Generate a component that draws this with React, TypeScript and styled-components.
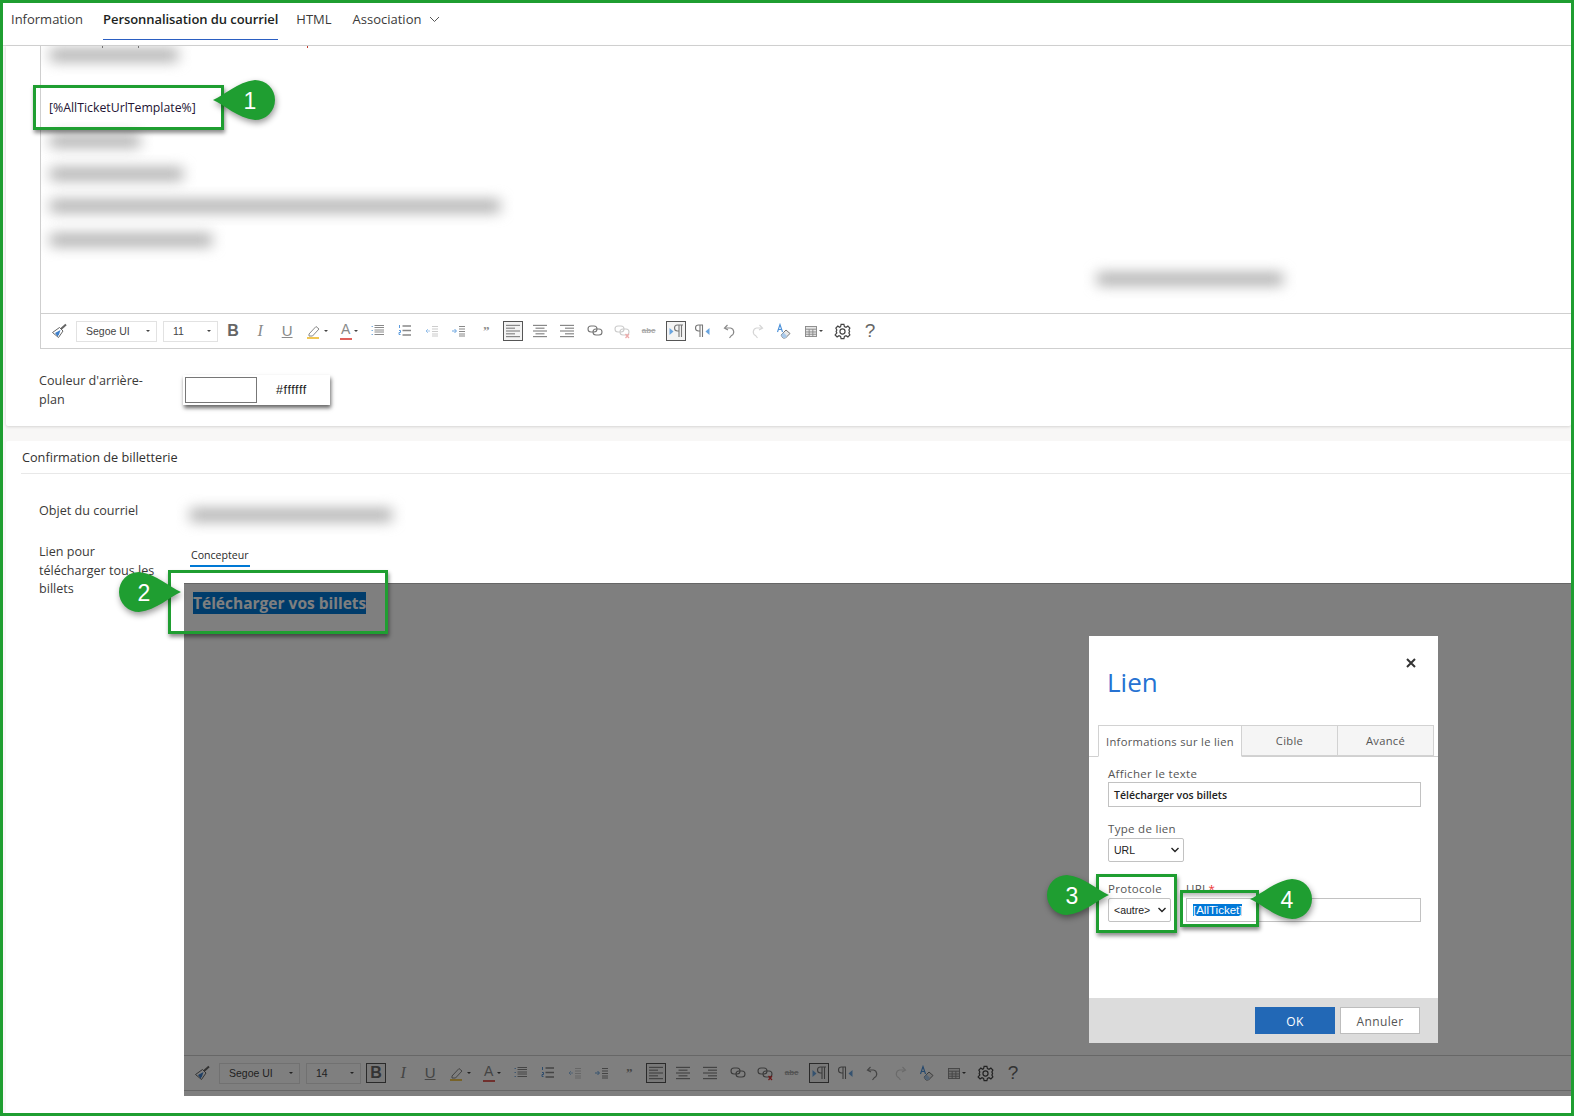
import React from 'react';
import styled, { createGlobalStyle } from 'styled-components';

const GREEN = '#1f9e31';

const GlobalStyle = createGlobalStyle`
  html, body {
    margin: 0;
    padding: 0;
    background: #fff;
    font-family: 'Open Sans', 'Noto Sans', Arial, sans-serif;
  }
`;

const Frame = styled.div`
  position: relative;
  box-sizing: border-box;
  width: 1574px;
  height: 1116px;
  border: 3px solid ${GREEN};
  background: #f8f7f6;
  display: flex;
  flex-direction: column;
  overflow: hidden;
  color: #323130;
`;

const TabBar = styled.nav`
  flex: none;
  box-sizing: border-box;
  height: 43px;
  background: #fff;
  border-bottom: 1px solid #d4d4d4;
  display: flex;
  padding-left: 8px;
  gap: 18px;
`;

const Tab = styled.div<{ $active?: boolean; $ml?: number }>`
  height: 37px;
  box-sizing: border-box;
  margin-left: ${(p) => p.$ml ?? 0}px;
  padding-bottom: 4px;
  font-size: 13px;
  line-height: 19px;
  font-weight: ${(p) => (p.$active ? 600 : 400)};
  letter-spacing: ${(p) => (p.$active ? '-0.07px' : '0')};
  color: ${(p) => (p.$active ? '#201f1e' : '#3b3a39')};
  border-bottom: 1px solid ${(p) => (p.$active ? '#2b5fc2' : 'transparent')};
  display: flex;
  align-items: center;
  gap: 8px;
`;

const CardTop = styled.section`
  flex: none;
  height: 380px;
  margin-left: 3px;
  background: #fff;
  box-shadow: 0 1px 3px rgba(0, 0, 0, 0.14);
  border-radius: 0 0 2px 2px;
`;

const EditorBox = styled.div`
  box-sizing: border-box;
  height: 303px;
  margin-left: 34px;
  border-left: 1px solid #cfcfcf;
  display: flex;
  flex-direction: column;
`;

const EditorBody = styled.div`
  flex: 1;
  padding-left: 9px;
  display: flex;
  flex-direction: column;
  align-items: flex-start;
  overflow: hidden;
`;

const CutLine = styled.div`
  flex: none;
  height: 3px;
  display: flex;
`;

const CutMark = styled.i<{ $ml: number; $red?: boolean }>`
  width: 1px;
  height: 2px;
  margin-left: ${(p) => p.$ml}px;
  background: ${(p) => (p.$red ? '#c0392b' : '#555')};
`;

const BlurLine = styled.div<{ $w: number; $mt: number; $right?: number }>`
  flex: none;
  width: ${(p) => p.$w}px;
  height: 12px;
  margin-top: ${(p) => p.$mt}px;
  background: #a8a8a8;
  filter: blur(7px);
  ${(p) => (p.$right ? `align-self: flex-end; margin-right: ${p.$right}px;` : '')}
`;

const TemplateText = styled.div`
  margin: 39px 0 0 -1px;
  font-size: 12.3px;
  line-height: 16px;
  color: #241433;
`;

const ToolbarRow = styled.div`
  flex: none;
  box-sizing: border-box;
  height: 36px;
  border-top: 1px solid #cfcfcf;
  border-bottom: 1px solid #cfcfcf;
  display: flex;
  align-items: center;
  padding-left: 5px;
`;

const ToolSelect = styled.div<{ $w: number; $ml: number }>`
  flex: none;
  box-sizing: border-box;
  width: ${(p) => p.$w}px;
  height: 21px;
  margin-left: ${(p) => p.$ml}px;
  border: 1px solid #e2e2e2;
  padding: 0 6px 0 9px;
  display: flex;
  align-items: center;
  justify-content: space-between;
  font-family: 'Liberation Sans', Arial, sans-serif;
  font-size: 10.5px;
  color: #444;
`;

const Caret = styled.span`
  width: 0;
  height: 0;
  border-left: 2px solid transparent;
  border-right: 2px solid transparent;
  border-top: 2px solid #444;
`;

const ToolButton = styled.div<{ $w?: number; $ml?: number }>`
  flex: none;
  width: ${(p) => p.$w ?? 27.05}px;
  height: 26px;
  margin-left: ${(p) => p.$ml ?? 0}px;
  display: flex;
  align-items: center;
  justify-content: center;
  gap: 2px;
`;

const ToolFace = styled.div<{ $active?: boolean }>`
  box-sizing: border-box;
  width: 20px;
  height: 20px;
  display: flex;
  align-items: center;
  justify-content: center;
  border: ${(p) => (p.$active ? '1.5px solid #555' : '0')};
  background: ${(p) => (p.$active ? '#f3f3f3' : 'transparent')};
`;

const LetterGlyph = styled.span<{ $serif?: boolean; $italic?: boolean; $bold?: boolean; $under?: boolean; $size?: number; $fade?: boolean }>`
  font-family: ${(p) => (p.$serif ? "'Liberation Serif', serif" : "'Liberation Sans', Arial, sans-serif")};
  font-size: ${(p) => p.$size ?? 15}px;
  line-height: 16px;
  font-style: ${(p) => (p.$italic ? 'italic' : 'normal')};
  font-weight: ${(p) => (p.$bold ? 700 : 400)};
  text-decoration: ${(p) => (p.$under ? 'underline' : 'none')};
  color: ${(p) => (p.$fade ? '#8a8a8a' : '#666')};
`;

const ColorGlyph = styled.span<{ $bar: string }>`
  display: flex;
  width: 12px;
  height: 16px;
  justify-content: center;
  font-family: 'Liberation Sans', Arial, sans-serif;
  font-size: 14px;
  line-height: 14px;
  color: #888;
  border-bottom: 2px solid ${(p) => p.$bar};
`;

const StrikeGlyph = styled.span`
  font-family: 'Liberation Sans', Arial, sans-serif;
  font-size: 8px;
  line-height: 10px;
  color: #aaa;
  text-decoration: line-through;
  font-weight: 700;
`;

const HelpGlyph = styled.span`
  font-family: 'Liberation Sans', Arial, sans-serif;
  font-size: 19px;
  line-height: 18px;
  color: #666;
`;

const MiniCaret = styled(Caret)`
  flex: none;
`;

const FieldRow = styled.div`
  display: flex;
  padding-left: 33px;
`;

const ColorRow = styled(FieldRow)`
  margin-top: 23px;
`;

const FieldLabel = styled.div`
  flex: none;
  width: 145px;
  font-size: 12.6px;
  line-height: 18.5px;
  color: #3b3a39;
`;

const ColorPicker = styled.div`
  flex: none;
  box-sizing: border-box;
  width: 147px;
  height: 30px;
  margin: 3px 0 0 -1px;
  padding: 2px;
  background: #fff;
  box-shadow: 1px 3px 4px rgba(0, 0, 0, 0.6);
  display: flex;
  align-items: center;
`;

const Swatch = styled.div`
  box-sizing: border-box;
  width: 72px;
  height: 26px;
  border: 1px solid #777;
  background: #fff;
`;

const ColorValue = styled.span`
  margin-left: 19px;
  font-family: 'Liberation Sans', Arial, sans-serif;
  font-size: 12.5px;
  letter-spacing: 0.6px;
  color: #222;
`;

const CardBottom = styled.section`
  flex: 1;
  min-height: 0;
  margin: 15px 0 0 3px;
  padding-bottom: 17px;
  background: #fff;
  border-radius: 2px 2px 0 0;
  display: flex;
  flex-direction: column;
`;

const SectionTitle = styled.h2`
  flex: none;
  box-sizing: border-box;
  height: 33px;
  margin: 0 0 0 15px;
  padding: 7px 0 0 1px;
  border-bottom: 1px solid #e8e8e8;
  font-size: 12.7px;
  line-height: 18px;
  font-weight: 500;
  color: #323130;
`;

const SubjectRow = styled(FieldRow)`
  flex: none;
  box-sizing: border-box;
  margin-top: 26px;
  height: 43px;
  padding-top: 2px;
`;

const SubjectBlur = styled.div`
  width: 202px;
  height: 12px;
  margin: 7px 0 0 6px;
  background: #a8a8a8;
  filter: blur(7px);
`;

const LinkRow = styled(FieldRow)`
  flex: 1;
  min-height: 0;
`;

const DesignerColumn = styled.div`
  flex: 1;
  min-width: 0;
  display: flex;
  flex-direction: column;
  margin-top: -1px;
`;

const ModeTabs = styled.div`
  flex: none;
  height: 41px;
  padding-left: 6px;
`;

const ModeTab = styled.div`
  display: inline-block;
  box-sizing: border-box;
  height: 23px;
  padding: 3px 1px 0;
  font-size: 10.6px;
  line-height: 16px;
  color: #2a2a2a;
  border-bottom: 2px solid #0078d4;
`;

const Designer = styled.div`
  position: relative;
  flex: 1;
  min-height: 0;
  box-sizing: border-box;
  border-top: 1px solid #ccc;
  display: flex;
  flex-direction: column;
  padding-bottom: 5px;
`;

const DesignerBody = styled.div`
  flex: 1;
  padding: 8px 0 0 9px;
`;

const SelectedHeading = styled.span`
  font-size: 15.5px;
  line-height: 22px;
  font-weight: 700;
  background: #0078d7;
  color: #fff;
`;

const Shade = styled.div`
  position: absolute;
  inset: -1px 0 0 0;
  background: rgba(0, 0, 0, 0.5);
`;

const Dialog = styled.div`
  position: absolute;
  top: 52px;
  right: 133px;
  width: 349px;
  height: 407px;
  background: #fff;
  display: flex;
  flex-direction: column;
`;

const CloseMark = styled.svg`
  position: absolute;
  top: 22px;
  right: 22px;
  width: 10px;
  height: 10px;
`;

const DialogTitle = styled.h1`
  flex: none;
  box-sizing: border-box;
  height: 89px;
  margin: 0;
  padding: 28px 0 0 18px;
  font-size: 26px;
  line-height: 36px;
  font-weight: 400;
  color: #2672d2;
`;

const DialogTabs = styled.div`
  flex: none;
  height: 32px;
  box-sizing: border-box;
  padding-left: 9px;
  border-bottom: 1px solid #d0d0d0;
  display: flex;
`;

const DialogTab = styled.div<{ $w: number; $active?: boolean }>`
  flex: none;
  box-sizing: border-box;
  width: ${(p) => p.$w}px;
  height: ${(p) => (p.$active ? 32 : 31)}px;
  border: 1px solid #d2d2d2;
  border-left-width: ${(p) => (p.$active ? 1 : 0)}px;
  border-bottom-color: ${(p) => (p.$active ? '#fff' : '#d2d2d2')};
  background: ${(p) => (p.$active ? '#fff' : '#f5f5f5')};
  display: flex;
  align-items: center;
  justify-content: center;
  font-size: 11.2px;
  letter-spacing: 0.3px;
  color: #555;
`;

const DialogBody = styled.div`
  flex: 1;
  padding: 9px 17px 0 19px;
  display: flex;
  flex-direction: column;
`;

const DialogLabel = styled.div<{ $mt?: number }>`
  height: 16px;
  margin-top: ${(p) => p.$mt ?? 0}px;
  font-size: 11.5px;
  line-height: 16px;
  letter-spacing: 0.3px;
  color: #555;
  white-space: nowrap;

  & > b {
    color: #e33;
    font-weight: 400;
  }
`;

const TextField = styled.div<{ $h?: number }>`
  box-sizing: border-box;
  height: ${(p) => p.$h ?? 24}px;
  border: 1px solid #c2c2c2;
  padding-left: 5px;
  display: flex;
  align-items: center;
  font-size: 10.5px;
  font-weight: 600;
  color: #222;
  white-space: nowrap;
`;

const SelectField = styled(TextField)<{ $w: number }>`
  width: ${(p) => p.$w}px;
  margin-top: 1px;
  border-radius: 2px;
  justify-content: space-between;
  padding-right: 4px;
  font-family: 'Liberation Sans', Arial, sans-serif;
  font-weight: 400;
`;

const Chevron = styled.svg`
  flex: none;
  width: 8px;
  height: 6px;
`;

const ProtocolRow = styled.div`
  margin-top: 19px;
  display: flex;
  gap: 15px;
`;

const ProtocolCol = styled.div`
  flex: none;
  width: 63px;
`;

const UrlCol = styled.div`
  flex: 1;
  min-width: 0;
`;

const UrlField = styled(TextField)`
  margin-top: 1px;
  padding-left: 6px;
  font-family: 'Liberation Sans', Arial, sans-serif;
  font-size: 11.5px;
  font-weight: 400;
`;

const SelectedUrl = styled.span`
  background: #0078d7;
  color: #fff;
`;

const DialogFooter = styled.div`
  flex: none;
  box-sizing: border-box;
  height: 45px;
  background: #dcdcdc;
  padding: 9px 18px 0 0;
  display: flex;
  justify-content: flex-end;
  gap: 5px;
`;

const FooterButton = styled.div<{ $primary?: boolean }>`
  box-sizing: border-box;
  width: 80px;
  height: 27px;
  padding-top: 1px;
  display: flex;
  align-items: center;
  justify-content: center;
  font-size: 12px;
  letter-spacing: 0.4px;
  background: ${(p) => (p.$primary ? '#2268b6' : '#fff')};
  color: ${(p) => (p.$primary ? '#fff' : '#555')};
  border: 1px solid ${(p) => (p.$primary ? '#2268b6' : '#bdbdbd')};
`;

const AnnotationLayer = styled.div`
  position: absolute;
  top: -3px;
  left: -3px;
  width: 1574px;
  height: 1116px;
  pointer-events: none;
`;

const Marker = styled.div<{ $x: number; $y: number; $w: number; $h: number; $band?: boolean }>`
  position: absolute;
  box-sizing: border-box;
  left: ${(p) => p.$x}px;
  top: ${(p) => p.$y}px;
  width: ${(p) => p.$w}px;
  height: ${(p) => p.$h}px;
  border: 3px solid ${GREEN};
  box-shadow: 1px 3px 4px rgba(0, 0, 0, 0.45);
  background: ${(p) => (p.$band ? 'linear-gradient(#bbb, #e6e6e6 4px, transparent 5px)' : 'none')};
`;

const CalloutBox = styled.div<{ $x: number; $y: number }>`
  position: absolute;
  left: ${(p) => p.$x}px;
  top: ${(p) => p.$y}px;
  width: 62px;
  height: 40px;
`;

const CalloutShape = styled.svg<{ $flip?: boolean }>`
  display: block;
  width: 62px;
  height: 40px;
  overflow: visible;
  transform: ${(p) => (p.$flip ? 'scaleX(-1)' : 'none')};
  filter: drop-shadow(${(p) => (p.$flip ? '-1px' : '1px')} 3px 3px rgba(0, 0, 0, 0.4));
`;

const CalloutNumber = styled.span<{ $flip?: boolean }>`
  position: absolute;
  top: 1px;
  left: ${(p) => (p.$flip ? 12 : 24)}px;
  width: 26px;
  height: 40px;
  display: flex;
  align-items: center;
  justify-content: center;
  font-family: 'Liberation Sans', Arial, sans-serif;
  font-size: 23px;
  color: #fff;
`;

const I = ({ children }: { children: React.ReactNode }) => (
  <svg width="16" height="16" viewBox="0 0 16 16" fill="none" stroke="#888" strokeWidth="1">
    {children}
  </svg>
);

const Lines = ({ rows }: { rows: [number, number][] }) => (
  <>
    {rows.map(([a, b], i) => (
      <path key={i} d={`M${a} ${2.4 + i * 2.8}H${b}`} strokeWidth="1.2" />
    ))}
  </>
);

const BrushIcon = () => (
  <I>
    <path d="M15 1.5 10 6" stroke="#666" strokeWidth="2" />
    <path d="M8.5 4.5 12 8 7.5 14.5 1.5 9.5Z" fill="#fff" stroke="#666" />
    <path d="M4 10 9.5 7 8 11.5 6.5 13.5Z" fill="#3f7fc9" stroke="none" />
  </I>
);

const ListIcon = () => (
  <I>
    <path d="M3 3.5H1.5M3 7.5H1.5M3 11.5H1.5" stroke="#7fb0e0" strokeWidth="1.2" />
    <path d="M4.5 2.5H14M4.5 4.5H14M4.5 7H14M4.5 9H14M4.5 11.5H14" strokeWidth="1" />
  </I>
);

const NumberListIcon = () => (
  <I>
    <path d="M2.5 2v3M2 7.5h1.5v2H2v2h1.5" stroke="#4a90d9" strokeWidth="0.9" />
    <path d="M5.5 3H14M5.5 7.5H14M5.5 12H14" strokeWidth="1.3" />
  </I>
);

const IndentIcon = ({ out, fade }: { out?: boolean; fade?: boolean }) => (
  <svg width="16" height="16" viewBox="0 0 16 16" fill="none">
    <path d={out ? 'M6 8H2M4 6 2 8l2 2' : 'M1 8H5M3.5 6 5.5 8l-2 2'} stroke="#6aa5e0" strokeWidth="1" opacity={fade ? 0.6 : 1} />
    <path d="M8 3.5H14M8 6H14M8 8.5H14M8 11H14M8 13H14" stroke={fade ? '#ccc' : '#888'} strokeWidth="1.1" />
  </svg>
);

const AlignIcon = ({ mode }: { mode: 'left' | 'center' | 'right' }) => {
  const short: [number, number] = mode === 'left' ? [1, 10] : mode === 'center' ? [3.5, 12.5] : [6, 15];
  const rows: [number, number][] = [[1, 15], short, [1, 15], short, [1, 15]];
  return (
    <I>
      <Lines rows={rows} />
    </I>
  );
};

const LinkIcon = ({ fade, broken }: { fade?: boolean; broken?: boolean }) => (
  <svg width="16" height="16" viewBox="0 0 16 16" fill="none" stroke={fade ? '#ccc' : '#777'} strokeWidth="1.1">
    <rect x="1" y="3" width="9" height="6" rx="3" />
    <rect x="6" y="6" width="9" height="6" rx="3" />
    {broken && <path d="M11.5 11 15 15M15 11l-3.5 4" stroke={fade ? '#eaa' : '#d33'} strokeWidth="1.2" />}
  </svg>
);

const ParagraphIcon = ({ rtl }: { rtl?: boolean }) => (
  <svg width="16" height="16" viewBox="0 0 16 16" fill="none">
    {rtl ? (
      <>
        <path d="M8 2H3.5a2.5 2.5 0 0 0 0 6H5M5 2v12M7.5 2v12" stroke="#777" strokeWidth="1.1" />
        <path d="M14.5 5v7L10.5 8.5Z" fill="#6aa5e0" />
      </>
    ) : (
      <>
        <path d="M15 2H9.5a2.5 2.5 0 0 0 0 6H11M11 2v12M13.5 2v12" stroke="#777" strokeWidth="1.1" />
        <path d="M1.5 5v7L5.5 8.5Z" fill="#6aa5e0" />
      </>
    )}
  </svg>
);

const UndoIcon = ({ redo, fade }: { redo?: boolean; fade?: boolean }) => (
  <svg width="16" height="16" viewBox="0 0 16 16" fill="none" stroke={fade ? '#d5d5d5' : '#888'} strokeWidth="1.2">
    <g transform={redo ? 'matrix(-1 0 0 1 16 0)' : undefined}>
      <path d="M5.5 2 2.5 5l3.5 2" />
      <path d="M3 5h5.5a4 4 0 0 1 1 7.5L7.5 15" />
    </g>
  </svg>
);

const ClearFormatIcon = () => (
  <svg width="16" height="16" viewBox="0 0 16 16" fill="none">
    <path d="M1.5 9 4 1.5 6.5 9M2.5 6.5h3" stroke="#4a90d9" strokeWidth="1.1" />
    <path d="M5 12 10 7l4 3.5-4.5 4.5H7Z" fill="#e8e8e8" stroke="#777" />
    <path d="M5 12 7.5 9.5l3.5 3.5-1.5 2H7Z" fill="#a9c9ea" />
  </svg>
);

const TableIcon = () => (
  <svg width="12" height="11" viewBox="0 0 13 12" fill="#e6e6e6" stroke="#888">
    <rect x="0.5" y="0.5" width="12" height="11" />
    <path d="M0.5 3.5h12M0.5 6.5h12M0.5 9h12M4.5 3.5V11.5M8.5 3.5V11.5" fill="none" />
  </svg>
);

const GearIcon = () => (
  <svg width="17" height="17" viewBox="0 0 24 24" fill="none" stroke="#444" strokeWidth="1.7">
    <path d="M10 2h4l.7 3 2.2 1 2.7-1.6 2.8 2.8L21 9.9l1 2.1 0 0 -1 2.1 1.4 2.7-2.8 2.8-2.7-1.6-2.2 1-.7 3h-4l-.7-3-2.2-1-2.7 1.6-2.8-2.8L4 14.1 3 12l1-2.1-1.4-2.7 2.8-2.8L8.1 6l1.2-1Z" />
    <circle cx="12" cy="12" r="3.6" />
  </svg>
);

const HighlightIcon = () => (
  <svg width="16" height="16" viewBox="0 0 16 16" fill="none">
    <path d="M3 11 10 3.5l3 2.5-6.5 7H3Z" stroke="#888" />
    <path d="M1 15h12" stroke="#f0c040" strokeWidth="1.8" />
  </svg>
);

const SmallChevron = () => (
  <Chevron viewBox="0 0 8 6" fill="none" stroke="#222" strokeWidth="1.4">
    <path d="M0.5 1 4 4.5 7.5 1" />
  </Chevron>
);

const Toolbar = ({ size, boldActive, linkReady }: { size: string; boldActive?: boolean; linkReady?: boolean }) => (
  <ToolbarRow>
    <ToolButton $w={26}><BrushIcon /></ToolButton>
    <ToolSelect $w={81} $ml={4}>Segoe UI<Caret /></ToolSelect>
    <ToolSelect $w={55} $ml={6}>{size}<Caret /></ToolSelect>
    <ToolButton $ml={1.5}>
      <ToolFace $active={boldActive}><LetterGlyph $bold $size={16}>B</LetterGlyph></ToolFace>
    </ToolButton>
    <ToolButton><LetterGlyph $serif $italic $fade $size={16}>I</LetterGlyph></ToolButton>
    <ToolButton><LetterGlyph $under $fade>U</LetterGlyph></ToolButton>
    <ToolButton $w={32}><HighlightIcon /><MiniCaret /></ToolButton>
    <ToolButton $w={32}><ColorGlyph $bar="#e0605a">A</ColorGlyph><MiniCaret /></ToolButton>
    <ToolButton><ListIcon /></ToolButton>
    <ToolButton><NumberListIcon /></ToolButton>
    <ToolButton><IndentIcon out fade /></ToolButton>
    <ToolButton><IndentIcon /></ToolButton>
    <ToolButton><LetterGlyph $bold $serif $fade $size={13}>”</LetterGlyph></ToolButton>
    <ToolButton><ToolFace $active><AlignIcon mode="left" /></ToolFace></ToolButton>
    <ToolButton><AlignIcon mode="center" /></ToolButton>
    <ToolButton><AlignIcon mode="right" /></ToolButton>
    <ToolButton><LinkIcon /></ToolButton>
    <ToolButton><LinkIcon fade={!linkReady} broken /></ToolButton>
    <ToolButton><StrikeGlyph>abc</StrikeGlyph></ToolButton>
    <ToolButton><ToolFace $active><ParagraphIcon /></ToolFace></ToolButton>
    <ToolButton><ParagraphIcon rtl /></ToolButton>
    <ToolButton><UndoIcon /></ToolButton>
    <ToolButton><UndoIcon redo fade /></ToolButton>
    <ToolButton $w={28}><ClearFormatIcon /></ToolButton>
    <ToolButton $w={31}><TableIcon /><MiniCaret /></ToolButton>
    <ToolButton><GearIcon /></ToolButton>
    <ToolButton><HelpGlyph>?</HelpGlyph></ToolButton>
  </ToolbarRow>
);

const Callout = ({ x, y, n, flip }: { x: number; y: number; n: number; flip?: boolean }) => (
  <CalloutBox $x={x} $y={y}>
    <CalloutShape $flip={flip} viewBox="0 0 62 40">
      <path d="M0 20C12 15 24 2 42 0a20 20 0 0 1 0 40C24 38 12 25 0 20Z" fill={GREEN} />
    </CalloutShape>
    <CalloutNumber $flip={flip}>{n}</CalloutNumber>
  </CalloutBox>
);

const LinkDialog = () => (
  <Dialog>
    <CloseMark viewBox="0 0 10 10" fill="none" stroke="#333" strokeWidth="2">
      <path d="M1 1l8 8M9 1l-8 8" />
    </CloseMark>
    <DialogTitle>Lien</DialogTitle>
    <DialogTabs>
      <DialogTab $w={144} $active>Informations sur le lien</DialogTab>
      <DialogTab $w={96}>Cible</DialogTab>
      <DialogTab $w={96}>Avancé</DialogTab>
    </DialogTabs>
    <DialogBody>
      <DialogLabel>Afficher le texte</DialogLabel>
      <TextField $h={25}>Télécharger vos billets</TextField>
      <DialogLabel $mt={14}>Type de lien</DialogLabel>
      <SelectField $w={76}>URL<SmallChevron /></SelectField>
      <ProtocolRow>
        <ProtocolCol>
          <DialogLabel>Protocole</DialogLabel>
          <SelectField $w={63}>&lt;autre&gt;<SmallChevron /></SelectField>
        </ProtocolCol>
        <UrlCol>
          <DialogLabel>URL<b>*</b></DialogLabel>
          <UrlField><SelectedUrl>[AllTicket]</SelectedUrl></UrlField>
        </UrlCol>
      </ProtocolRow>
    </DialogBody>
    <DialogFooter>
      <FooterButton $primary>OK</FooterButton>
      <FooterButton>Annuler</FooterButton>
    </DialogFooter>
  </Dialog>
);

export default function App() {
  return (
    <>
      <GlobalStyle />
      <Frame>
        <TabBar>
          <Tab>Information</Tab>
          <Tab $active $ml={2}>Personnalisation du courriel</Tab>
          <Tab>HTML</Tab>
          <Tab $ml={3}>
            Association
            <svg width="11" height="7" viewBox="0 0 11 7" fill="none" stroke="#555" strokeWidth="1">
              <path d="M1 1l4.5 4.5L10 1" />
            </svg>
          </Tab>
        </TabBar>

        <CardTop>
          <EditorBox>
            <EditorBody>
              <CutLine>
                <CutMark $ml={52} />
                <CutMark $ml={35} />
                <CutMark $ml={168} $red />
              </CutLine>
              <BlurLine $w={128} $mt={0} />
              <TemplateText>[%AllTicketUrlTemplate%]</TemplateText>
              <BlurLine $w={90} $mt={19} />
              <BlurLine $w={133} $mt={21} />
              <BlurLine $w={450} $mt={20} />
              <BlurLine $w={162} $mt={22} />
              <BlurLine $w={186} $mt={27} $right={288} />
            </EditorBody>
            <Toolbar size="11" />
          </EditorBox>
          <ColorRow>
            <FieldLabel>Couleur d'arrière-<br />plan</FieldLabel>
            <ColorPicker>
              <Swatch />
              <ColorValue>#ffffff</ColorValue>
            </ColorPicker>
          </ColorRow>
        </CardTop>

        <CardBottom>
          <SectionTitle>Confirmation de billetterie</SectionTitle>
          <SubjectRow>
            <FieldLabel>Objet du courriel</FieldLabel>
            <SubjectBlur />
          </SubjectRow>
          <LinkRow>
            <FieldLabel>Lien pour<br />télécharger tous les<br />billets</FieldLabel>
            <DesignerColumn>
              <ModeTabs><ModeTab>Concepteur</ModeTab></ModeTabs>
              <Designer>
                <DesignerBody>
                  <SelectedHeading>Télécharger vos billets</SelectedHeading>
                </DesignerBody>
                <Toolbar size="14" boldActive linkReady />
                <Shade />
                <LinkDialog />
              </Designer>
            </DesignerColumn>
          </LinkRow>
        </CardBottom>

        <AnnotationLayer>
          <Marker $x={33} $y={85} $w={191} $h={45} />
          <Callout x={213} y={80} n={1} />
          <Marker $x={168} $y={570} $w={220} $h={64} />
          <Callout x={119} y={572} n={2} flip />
          <Marker $x={1096} $y={874} $w={81} $h={59} />
          <Callout x={1047} y={875} n={3} flip />
          <Marker $x={1180} $y={890} $w={79} $h={37} $band />
          <Callout x={1250} y={879} n={4} />
        </AnnotationLayer>
      </Frame>
    </>
  );
}
